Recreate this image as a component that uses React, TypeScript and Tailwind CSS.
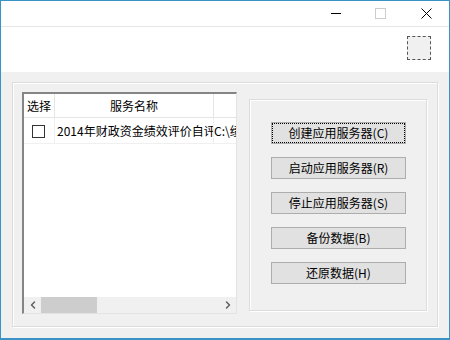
import { ChevronLeft, ChevronRight } from 'lucide-react';

const buttons = [
  '创建应用服务器(C)',
  '启动应用服务器(R)',
  '停止应用服务器(S)',
  '备份数据(B)',
  '还原数据(H)',
];

export default function App() {
  return (
    <div
      className="w-[450px] h-[340px] flex flex-col border border-b-2 border-[#3a93c6] bg-[#f0f0f0] text-black overflow-hidden"
      style={{ fontFamily: '"Noto Sans CJK SC", "Noto Sans", sans-serif' }}
    >
      {/* title bar */}
      <div className="h-[26px] bg-white border-b border-[#e6e6e6] flex items-center justify-end shrink-0">
        <div className="w-[45px] h-[25px] flex items-center justify-center">
          <div className="w-[10px] h-px bg-black" />
        </div>
        <div className="w-[45px] h-[25px] flex items-center justify-center">
          <div className="w-[11px] h-[11px] border border-[#cccccc]" />
        </div>
        <div className="w-[46px] h-[25px] flex items-center justify-center">
          <svg width="11" height="11" viewBox="0 0 11 11" aria-hidden="true">
            <path d="M0.5 0.5l10 10M10.5 0.5l-10 10" stroke="#000" strokeWidth="1" />
          </svg>
        </div>
      </div>

      {/* white band */}
      <div className="h-[45px] bg-white flex justify-end items-start pt-[9px] pr-[18px] shrink-0">
        <div className="w-[24px] h-[24px] bg-[#f0f0f0] border border-dashed border-[#555]" />
      </div>

      {/* client area */}
      <div className="flex-1 pl-[11px] pt-[10px]">
        <div className="w-[426px] h-[245px] border border-[#dcdcdc] shadow-[inset_1px_1px_0_#fff,1px_1px_0_#fff] flex items-start pl-[9px] pt-[9px]">
          {/* list view */}
          <div className="w-[215px] h-[222px] bg-white border-t-2 border-l-2 border-[#858585] border-r border-b border-r-[#e3e3e3] border-b-[#e3e3e3] flex flex-col text-[12px]">
            <div className="h-[24px] flex border-b border-[#e5e5e5] shrink-0">
              <div className="w-[31px] border-r border-[#e5e5e5] pl-[3px] flex items-center">选择</div>
              <div className="w-[159px] border-r border-[#e5e5e5] flex items-center justify-center">服务名称</div>
              <div className="flex-1" />
            </div>
            <div className="h-[26px] flex border-b border-[#f0f0f0] shrink-0">
              <div className="w-[31px] border-r border-[#f0f0f0] flex items-center pl-[8px]">
                <div className="w-[13px] h-[13px] border border-[#333] bg-white mt-[1px]" />
              </div>
              <div className="w-[159px] border-r border-[#f0f0f0] flex items-center pl-[2px] overflow-hidden whitespace-nowrap">
                2014年财政资金绩效评价自评系统
              </div>
              <div className="flex-1 flex items-center overflow-hidden whitespace-nowrap">C:\绩效</div>
            </div>
            <div className="flex-1" />
            <div className="h-[16px] bg-[#f0f0f0] flex items-center shrink-0">
              <div className="w-[17px] h-full flex items-center justify-center text-[#606060]">
                <ChevronLeft size={12} strokeWidth={3} />
              </div>
              <div className="w-[56px] h-full bg-[#cdcdcd]" />
              <div className="flex-1" />
              <div className="w-[17px] h-full flex items-center justify-center text-[#606060]">
                <ChevronRight size={12} strokeWidth={3} />
              </div>
            </div>
          </div>

          {/* button group */}
          <div className="ml-[12px] mt-[7px] w-[178px] h-[212px] border border-[#dcdcdc] shadow-[inset_1px_1px_0_#fff,1px_1px_0_#fff] flex flex-col pl-[21px] pt-[22px] gap-[13px]">
            {buttons.map((label, i) => (
              <button
                key={label}
                type="button"
                className={
                  'w-[135px] h-[22px] bg-[#e1e1e1] border border-[#adadad] text-[12px] leading-none flex items-center justify-center ' +
                  (i === 0 ? 'outline-1 outline-dotted outline-black -outline-offset-2' : '')
                }
              >
                {label}
              </button>
            ))}
          </div>
        </div>
      </div>
    </div>
  );
}
